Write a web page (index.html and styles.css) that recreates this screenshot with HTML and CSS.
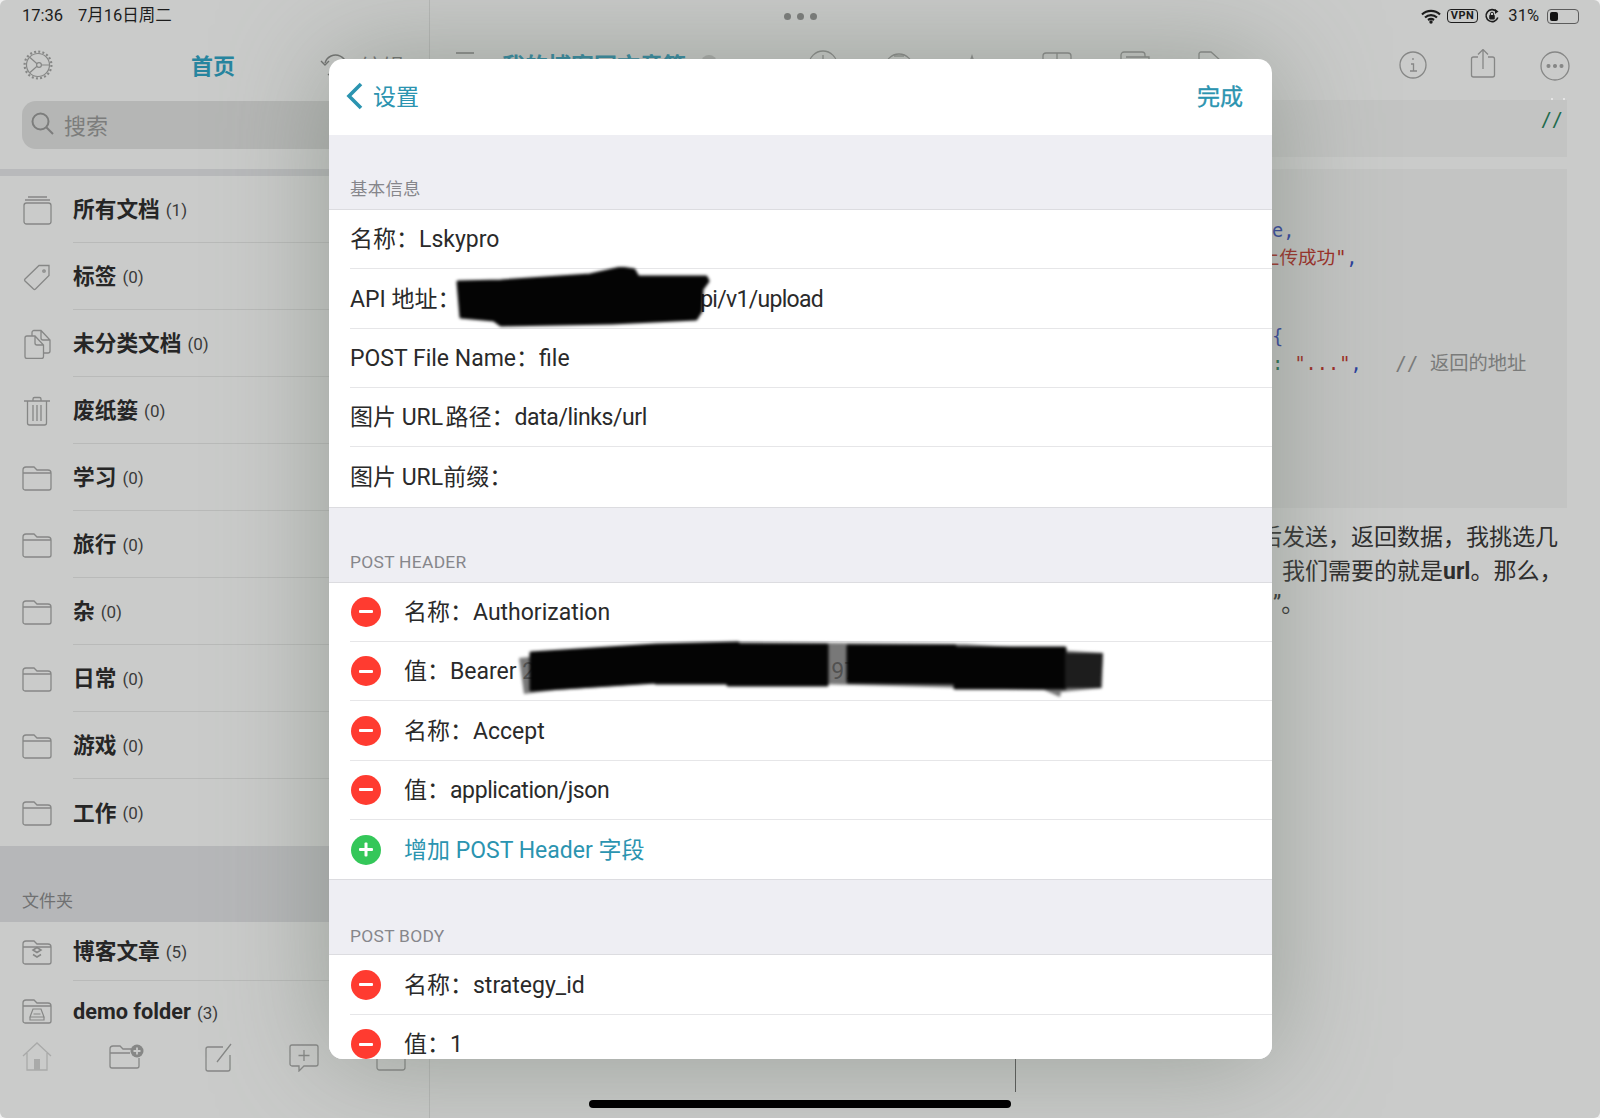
FILE: index.html
```
<!DOCTYPE html>
<html>
<head>
	<meta charset="utf-8">
	<title>设置</title>
	<link rel="stylesheet" href="styles.css">
</head>
<body>
<div class="screen">
	<div class="status">
		<span class="status-time">17:36</span>
		<span class="status-date">7月16日周二</span>
		<span class="status-dots"><i></i><i></i><i></i></span>
		<span class="status-right">
			<svg width="20" height="15" viewBox="0 0 20 15"><path d="M1 5.500a13 13 0 0 1 18 0M4 8.500a9 9 0 0 1 12 0M7 11a5 5 0 0 1 6 0" fill="none" stroke="#1c1c1c" stroke-width="2.200"/><circle cx="10" cy="13" r="1.700" fill="#1c1c1c"/></svg>
			<span class="vpn">VPN</span>
			<svg width="16" height="16" viewBox="0 0 16 16"><path d="M13.800 9.500A6 6 0 1 1 12.500 3.500" fill="none" stroke="#1c1c1c" stroke-width="1.600"/><path d="M11 1l3.500 2.500L11 6z" fill="#1c1c1c"/><rect x="5.200" y="7" width="5.600" height="4.400" rx=".8" fill="#1c1c1c"/><path d="M6.400 7V5.800a1.600 1.600 0 0 1 3.200 0V7" fill="none" stroke="#1c1c1c"/></svg>
			<span class="battery-text">31%</span>
			<span class="battery"><b></b></span>
		</span>
	</div>

	<aside class="sidebar">
		<div class="side-top">
			<svg class="gear" width="30" height="30" viewBox="0 0 30 30" fill="none" stroke="#868786" stroke-width="1.200"><circle cx="15" cy="15" r="11.500"/><circle cx="15" cy="15" r="13.400" stroke-width="2.200" stroke-dasharray="2 2.200"/><circle cx="16" cy="15" r="2.400"/><path d="M14 13.800L7 7.500M14 16.200L7 22.500M18.400 15H26.500"/></svg>
			<span class="side-title">首页</span>
			<svg class="sync" width="30" height="30" viewBox="0 0 30 30" fill="none" stroke="#6f706f" stroke-width="1.400"><path d="M7 13a11 11 0 1 1 3 11"/><path d="M3 11l4 4 4-4"/></svg>
			<span class="side-edit">编辑</span>
		</div>
		<div class="search">
			<svg width="25" height="25" viewBox="0 0 25 25" fill="none" stroke="#7c7d7c" stroke-width="2"><circle cx="10.500" cy="10.500" r="8"/><path d="M16.500 16.500l6.500 6.500"/></svg>
			<span>搜索</span>
		</div>
		<div class="band"></div>
		<ul class="side-list">
			<li><svg class="ic" viewBox="0 0 30 30"><rect x="2" y="8" width="27" height="21" rx="2.500"/><path d="M3 5h25M6 2h19"/></svg><span class="side-row"><b>所有文档</b> <em>(1)</em></span></li>
			<li><svg class="ic" viewBox="0 0 30 30"><path d="M3 17L17 3.500h10v10L13.500 27a1.500 1.500 0 0 1-2 0L3 19a1.500 1.500 0 0 1 0-2z"/><circle cx="22" cy="9" r="1.200"/></svg><span class="side-row"><b>标签</b> <em>(0)</em></span></li>
			<li><svg class="ic" viewBox="0 0 30 30"><path d="M10 7V3.500a2 2 0 0 1 2-2h7l9 9.500v11a2 2 0 0 1-2 2h-4.500M19 1.500V9a2 2 0 0 0 2 2h7"/><path d="M3 9a2 2 0 0 1 2-2h8l8.500 9v11.500a2 2 0 0 1-2 2H5a2 2 0 0 1-2-2zM13 7v7a2 2 0 0 0 2 2h6.500"/></svg><span class="side-row"><b>未分类文档</b> <em>(0)</em></span></li>
			<li><svg class="ic" viewBox="0 0 30 30"><path d="M2 5h26M11 5V3a1.500 1.500 0 0 1 1.500-1.500h5A1.500 1.500 0 0 1 19 3v2M5.500 5v22a2 2 0 0 0 2 2h15a2 2 0 0 0 2-2V5M11 9v16M15 9v16M19 9v16"/></svg><span class="side-row"><b>废纸篓</b> <em>(0)</em></span></li>
			<li><svg class="ic" viewBox="0 1 30 30"><use href="#folder"/></svg><span class="side-row"><b>学习</b> <em>(0)</em></span></li>
			<li><svg class="ic" viewBox="0 1 30 30"><use href="#folder"/></svg><span class="side-row"><b>旅行</b> <em>(0)</em></span></li>
			<li><svg class="ic" viewBox="0 1 30 30"><use href="#folder"/></svg><span class="side-row"><b>杂</b> <em>(0)</em></span></li>
			<li><svg class="ic" viewBox="0 1 30 30"><use href="#folder"/></svg><span class="side-row"><b>日常</b> <em>(0)</em></span></li>
			<li><svg class="ic" viewBox="0 1 30 30"><use href="#folder"/></svg><span class="side-row"><b>游戏</b> <em>(0)</em></span></li>
			<li><svg class="ic" viewBox="0 1 30 30"><use href="#folder"/></svg><span class="side-row"><b>工作</b> <em>(0)</em></span></li>
		</ul>
		<div class="side-section">文件夹</div>
		<ul class="side-list folders">
			<li><svg class="ic" viewBox="0 1 30 30"><use href="#folder"/><path d="M11 14l4 2.500 4-2.500-4-2.500zM11 18.500l4 2.500 4-2.500" stroke-width="1.500"/></svg><span class="side-row"><b>博客文章</b> <em>(5)</em></span></li>
			<li><svg class="ic" viewBox="0 1 30 30"><use href="#folder"/><path d="M8 22l3-8h8l3 8zM8 22v3h14v-3M11.500 19h7" stroke-width="1.200"/></svg><span class="side-row"><b>demo folder</b> <em>(3)</em></span></li>
		</ul>
		<div class="side-tools">
			<svg class="ic faint" viewBox="0 0 30 30"><path d="M1 14L15 1l14 13M5 11v17h20V11"/><rect x="12" y="17" width="6" height="11" fill="#a9aaa9" stroke="none"/></svg>
			<svg class="ic wide" viewBox="0 0 36 30"><path d="M1 7a3 3 0 0 1 3-3h7l3 3h8M1 7v17a2 2 0 0 0 2 2h25a2 2 0 0 0 2-2V16M1 11h20"/><circle cx="28" cy="9" r="6.500" fill="#868786" stroke="none"/><path d="M28 5.500v7M24.500 9h7" stroke="#c9cac9" stroke-width="1.800"/></svg>
			<svg class="ic" viewBox="0 0 30 30"><path d="M21 5H6a2 2 0 0 0-2 2v20a2 2 0 0 0 2 2h20a2 2 0 0 0 2-2V13M15 20L29 2"/></svg>
			<svg class="ic" viewBox="0 0 30 30"><path d="M3 3h24a2 2 0 0 1 2 2v17a2 2 0 0 1-2 2H15l-5 5v-5H3a2 2 0 0 1-2-2V5a2 2 0 0 1 2-2zM15 8v11M9.500 13.500h11"/></svg>
			<svg class="ic" viewBox="0 0 30 30"><rect x="1" y="1" width="28" height="27" rx="2.500"/></svg>
		</div>
	</aside>

	<main class="main">
		<div class="nav">
			<div class="nav-left">
				<span class="nav-menu"><i></i><i></i></span>
				<span class="nav-title">我的博客园文章等</span>
				<span class="nav-badge"></span>
				<span class="nav-tools">
					<svg class="ic" viewBox="0 0 30 30"><circle cx="15" cy="15" r="14"/><path d="M15 5v10"/></svg>
					<svg class="ic" viewBox="0 0 30 30"><circle cx="13" cy="18" r="14"/><path d="M8 6h10"/></svg>
					<svg class="ic" viewBox="0 0 30 30"><path d="M2 24L8 6l6 18"/></svg>
					<svg class="ic" viewBox="0 0 30 30"><rect x="1" y="3" width="28" height="24" rx="3"/><path d="M15 3v24"/></svg>
					<svg class="ic" viewBox="0 0 30 30"><path d="M1 27V5a3 3 0 0 1 3-3h18a3 3 0 0 1 3 3v2M6 7h23v18"/></svg>
					<svg class="ic" viewBox="0 0 30 30"><path d="M1 27V4a2 2 0 0 1 2-2h10l9 8v17"/></svg>
				</span>
			</div>
			<div class="nav-icons">
				<svg class="ic big" viewBox="0 0 32 32"><circle cx="16" cy="16" r="13"/><path d="M16 9v2M14 15h2.500v7M13 22h7"/></svg>
				<svg class="ic big" viewBox="0 0 32 32"><path d="M11 8H6.500a2 2 0 0 0-2 2v16a2 2 0 0 0 2 2h19a2 2 0 0 0 2-2V10a2 2 0 0 0-2-2H21M16 20V.5M11 5.500l5-5 5 5"/></svg>
				<svg class="ic big" viewBox="0 0 32 32"><circle cx="16" cy="17" r="14"/><circle cx="9.500" cy="17" r="1.400" fill="#868786"/><circle cx="16" cy="17" r="1.400" fill="#868786"/><circle cx="22.500" cy="17" r="1.400" fill="#868786"/></svg>
			</div>
		</div>
		<div class="marks"><i></i><i></i></div>
		<div class="code-block short">
			<pre class="code"><span class="green">                             //</span></pre>
		</div>
		<div class="code-block tall">
			<pre class="code"><span class="blue">     e,</span>
   <span class="red">"上传成功"</span><span class="blue">,</span>


     <span class="blue">{</span>
     <span class="green">:</span> <span class="red">"..."</span><span class="blue">,</span>   <span class="gray">// 返回的地址</span></pre>
		</div>
		<div class="para">
			<p>后发送&#xFF0C;返回数据&#xFF0C;我挑选几</p>
			<p class="para-two">我们需要的就是<strong>url</strong>。那么&#xFF0C;</p>
			<p class="para-end"><span>”</span>。</p>
		</div>
		<span class="cursor-line"></span>
	</main>

	<section class="modal">
		<header class="modal-head">
			<span class="back">
				<svg width="18" height="28" viewBox="0 0 18 28" fill="none" stroke="#2b94b0" stroke-width="3.600"><path d="M15 2L3 14l12 12"/></svg>
				<span>设置</span>
			</span>
			<span class="done">完成</span>
		</header>
		<div class="modal-body">
			<h3>基本信息</h3>
			<ul class="group">
				<li><div class="cell">名称&#xFF1A;<span>Lskypro</span></div></li>
				<li><div class="cell">API 地址&#xFF1A;<span class="tighter">http<span class="gap-one"></span>api/v1/upload</span></div></li>
				<li><div class="cell">POST File Name&#xFF1A;<span>file</span></div></li>
				<li><div class="cell">图片 URL&#x200A;路径&#xFF1A;<span class="tight">data/links/url</span></div></li>
				<li><div class="cell">图片 URL前缀&#xFF1A;</div></li>
			</ul>
			<h3>POST HEADER</h3>
			<ul class="group">
				<li><span class="minus"></span><div class="cell">名称&#xFF1A;<span>Authorization</span></div></li>
				<li><span class="minus"></span><div class="cell">值&#xFF1A;<span>Bearer 2<span class="gap-two"></span>97</span></div></li>
				<li><span class="minus"></span><div class="cell">名称&#xFF1A;<span>Accept</span></div></li>
				<li><span class="minus"></span><div class="cell">值&#xFF1A;<span class="tight">application/json</span></div></li>
				<li><span class="plus"></span><div class="cell add">增加 POST Header 字段</div></li>
			</ul>
			<h3 class="body-label">POST BODY</h3>
			<ul class="group">
				<li><span class="minus"></span><div class="cell">名称&#xFF1A;<span>strategy_id</span></div></li>
				<li><span class="minus"></span><div class="cell">值&#xFF1A;<span>1</span></div></li>
			</ul>
		</div>
		<svg class="scribble one" width="255" height="60" viewBox="0 0 255 60"><path d="M2 15L45 14 134 8 165 1 178 3 182 10 250 10 252 14 246 22 245 44 240 52 156 56 45 58 38 53 5 50z"/></svg>
		<svg class="scribble two" width="590" height="60" viewBox="0 0 590 60">
			<path class="fringe" d="M3 18L120 8 217 2 450 4 587 13 586 48 545 52 544 57 528 50 300 44 140 43 40 50 8 54z"/>
			<path d="M15 13L140 5V42L15 50zM140 5L222 3V43H140zM212 5H311V45H212zM332 6H439V43L332 42zM439 8H549V48H439z"/>
			<path class="soft" d="M549 13H587L585 48H549z"/>
		</svg>
	</section>

	<div class="home-bar"></div>
</div>

<svg class="defs" width="0" height="0"><defs><path id="folder" d="M1 8a3 3 0 0 1 3-3h8l3 3h11a3 3 0 0 1 3 3v15a2 2 0 0 1-2 2H3a2 2 0 0 1-2-2zM1 11h28"/></defs></svg>
</body>
</html>
```
FILE: styles.css
```
*{
	box-sizing: border-box;
}
body{
	margin: 0;
	background: #f0f0f0;
	font-family: Roboto, "Noto Sans CJK SC", sans-serif;
	color: #262626;
}
ul{
	list-style: none;
	margin: 0;
	padding: 0;
}
.defs{
	position: absolute;
}

.screen{
	position: relative;
	width: 1600px;
	height: 1118px;
	overflow: hidden;
	display: flex;
	background: #cacbca;
	border-radius: 6px;
}

/* status bar */
.status{
	position: absolute;
	top: 0;
	left: 0;
	right: 0;
	height: 32px;
	font-size: 16.500px;
	line-height: 20px;
	color: #1c1c1c;
}
.status-time{
	position: absolute;
	left: 22px;
	top: 6px;
}
.status-date{
	position: absolute;
	left: 78px;
	top: 6px;
}
.status-dots{
	position: absolute;
	left: 784px;
	top: 13px;
	display: flex;
	gap: 6px;
}
.status-dots i{
	width: 7px;
	height: 7px;
	border-radius: 50%;
	background: #7a7b7a;
}
.status-right{
	position: absolute;
	right: 21px;
	top: 6px;
	display: flex;
	align-items: center;
	gap: 6px;
}
.vpn{
	border: 1.500px solid #1c1c1c;
	border-radius: 4px;
	font-size: 11px;
	font-weight: 700;
	line-height: 12px;
	padding: 0 3px;
	letter-spacing: .5px;
}
.battery-text{
	margin: 0 2px;
}
.battery{
	width: 32px;
	height: 15px;
	border: 1px solid #5c5c5c;
	border-radius: 4px;
	padding: 2px;
	display: block;
}
.battery b{
	display: block;
	width: 8px;
	height: 100%;
	background: #111;
	border-radius: 2px;
}

/* sidebar */
.sidebar{
	width: 430px;
	flex: 0 0 auto;
	border-right: 1px solid #b7b8b7;
	display: flex;
	flex-direction: column;
}
.side-top{
	height: 68px;
	margin-top: 32px;
	display: flex;
	align-items: center;
	padding-left: 23px;
	padding-bottom: 3px;
	position: relative;
}
.side-title{
	position: absolute;
	left: 191px;
	margin-top: -2px;
	font-size: 22px;
	font-weight: 700;
	color: #27859f;
}
.sync{
	position: absolute;
	left: 318px;
}
.side-edit{
	position: absolute;
	left: 360px;
	font-size: 22px;
	color: #6f706f;
}
.search{
	height: 48px;
	margin: 1px 0 0 22px;
	background: #b5b6b5;
	border-radius: 14px 0 0 14px;
	display: flex;
	align-items: center;
	gap: 9px;
	padding: 0 0 3px 8px;
	font-size: 22px;
	color: #7c7d7c;
}
.band{
	height: 7px;
	margin-top: 20px;
	background: #b8b9bb;
}
.side-list li{
	height: 67px;
	display: flex;
	align-items: center;
	gap: 21px;
	padding-left: 22px;
}
.side-row{
	flex: 1;
	height: 100%;
	display: flex;
	align-items: center;
	gap: 6px;
	padding-bottom: 3px;
	border-bottom: 1px solid #b9bab9;
	font-size: 21.700px;
}
.side-list li:last-child .side-row{
	border-bottom: 0;
}
.side-row b{
	font-weight: 700;
}
.side-row em{
	font-style: normal;
	font-size: 17px;
	margin-top: 4px;
	color: #3b3b3b;
}
.side-section{
	height: 76px;
	background: #b6b7b9;
	font-size: 17px;
	line-height: 24px;
	color: #6f7071;
	padding: 43px 0 0 22px;
}
.folders li{
	height: 59px;
}
.folders li:last-child{
	height: 60px;
}
.folders li:last-child .side-row{
	padding-bottom: 0;
}
.ic{
	width: 30px;
	height: 30px;
	flex: 0 0 auto;
	fill: none;
	stroke: #868786;
	stroke-width: 1.300;
}
.ic.faint{
	stroke: #a9aaa9;
}
.ic.wide{
	width: 36px;
}
.side-tools{
	position: absolute;
	left: 22px;
	top: 1042px;
	display: flex;
	gap: 57px;
}

/* editor behind the sheet */
.main{
	flex: 1;
	min-width: 0;
	padding: 32px 33px 0 20px;
}
.nav{
	height: 66px;
	display: flex;
	justify-content: space-between;
	align-items: center;
}
.nav-left{
	display: flex;
	align-items: center;
	padding-left: 6px;
}
.nav-menu{
	margin-right: 28px;
	margin-top: -2px;
}
.nav-menu i{
	display: block;
	width: 18px;
	height: 2px;
	margin: 0 0 10px;
	background: #8a8b8a;
}
.nav-title{
	font-size: 23px;
	line-height: 28px;
	font-weight: 700;
	margin-top: 3px;
	color: #27859f;
}
.nav-badge{
	width: 16px;
	height: 16px;
	margin-left: 15px;
	margin-top: -5px;
	border-radius: 50%;
	background: #a9aaa9;
}
.nav-tools{
	display: flex;
	gap: 48px;
	margin-left: 91px;
}
.nav-icons{
	display: flex;
	gap: 38px;
	margin-right: -4px;
	margin-top: -1px;
}
.nav-icons .big:last-child{
	margin-left: 2px;
}
.ic.big{
	width: 32px;
	height: 32px;
}
.marks{
	height: 2px;
	display: flex;
	justify-content: flex-end;
	gap: 10px;
	padding-right: 2px;
}
.marks i{
	width: 2px;
	height: 2px;
	background: #e4e4e4;
}
.code-block{
	background: #c3c4c3;
	padding-left: 766px;
	overflow: hidden;
}
.short{
	height: 57px;
	padding-top: 7px;
}
.tall{
	height: 339px;
	margin-top: 12px;
	padding-top: 49px;
}
.code{
	margin: 0;
	font-family: "DejaVu Sans Mono", "Noto Sans CJK SC", monospace;
	font-size: 18.600px;
	line-height: 26.500px;
	color: #3a3a3a;
}
.green{
	color: #1e6b4c;
}
.blue{
	color: #2b3f9c;
}
.red{
	color: #9c2a22;
}
.gray{
	color: #7a7b7a;
	font-size: 19.300px;
}
.para{
	padding: 13px 0 0 809px;
	font-size: 23px;
	line-height: 33.500px;
	color: #2e2e2e;
	white-space: nowrap;
}
.para p{
	margin: 0;
}
.para-two{
	padding-left: 23px;
}
.para-end{
	padding-left: 14px;
}
.para-end span{
	font-family: Roboto, sans-serif;
}
.cursor-line{
	position: absolute;
	left: 1015px;
	top: 1059px;
	width: 1px;
	height: 33px;
	background: #555;
}

/* settings sheet */
.modal{
	position: absolute;
	left: 329px;
	top: 59px;
	width: 943px;
	height: 1000px;
	background: #fff;
	border-radius: 14px;
	overflow: hidden;
	box-shadow: 0 0 110px rgba(112,122,110,.55);
}
.modal-head{
	height: 76px;
	display: flex;
	justify-content: space-between;
	align-items: center;
	padding: 0 29px 2px 17px;
	font-size: 23px;
	color: #2b94b0;
}
.back{
	display: flex;
	align-items: center;
	gap: 9px;
}
.back span{
	margin-top: -2px;
}
.done{
	-webkit-text-stroke: .35px #2b94b0;
	margin-top: -2px;
}
.modal-body{
	background: #eeeef3;
	height: 924px;
}
.modal-body h3{
	margin: 0;
	height: 74px;
	padding-top: 43px;
	padding-left: 21px;
	font-size: 17.400px;
	line-height: 22px;
	letter-spacing: .3px;
	font-weight: 400;
	color: #86868b;
}
.modal-body .body-label{
	padding-top: 45px;
}
.group{
	background: #fff;
	border-top: 1px solid #dcdce0;
	border-bottom: 1px solid #dcdce0;
}
.group li{
	height: 59.350px;
	margin-left: 21px;
	display: flex;
	align-items: center;
	border-bottom: 1px solid #e6e6e8;
	font-size: 23px;
}
.group li:last-child{
	border-bottom: 0;
}
.cell{
	flex: 1;
	display: flex;
	align-items: baseline;
	padding-bottom: 4px;
	color: #2a2a2a;
	white-space: pre;
}
.minus, .plus{
	position: relative;
	width: 30px;
	height: 30px;
	margin-left: 1px;
	margin-right: 23px;
	border-radius: 50%;
	background: #ff3b30;
	flex: 0 0 auto;
}
.minus:before, .plus:before, .plus:after{
	content: "";
	position: absolute;
	left: 8px;
	top: 13.500px;
	width: 14px;
	height: 3px;
	background: #fff;
	border-radius: 1px;
}
.plus{
	background: #34c759;
}
.plus:after{
	transform: rotate(90deg);
}
.add{
	color: #2b94b0;
}
.tight{
	letter-spacing: -.4px;
}
.tighter{
	letter-spacing: -.7px;
}
.gap-one{
	display: inline-block;
	width: 190px;
}
.gap-two{
	display: inline-block;
	width: 296px;
}
.scribble{
	position: absolute;
	fill: #040404;
	stroke: #040404;
	stroke-width: 3px;
	stroke-linejoin: round;
	filter: blur(1.500px);
}
.scribble .fringe{
	fill: #5a5a5a;
	stroke: none;
	opacity: .82;
}
.scribble .soft{
	fill: #1d1d1d;
	stroke: none;
}
.scribble.one{
	left: 127px;
	top: 208px;
}
.scribble.two{
	left: 187px;
	top: 581px;
}

.home-bar{
	position: absolute;
	left: 589px;
	top: 1100px;
	width: 422px;
	height: 8px;
	border-radius: 4px;
	background: #000;
}
```
